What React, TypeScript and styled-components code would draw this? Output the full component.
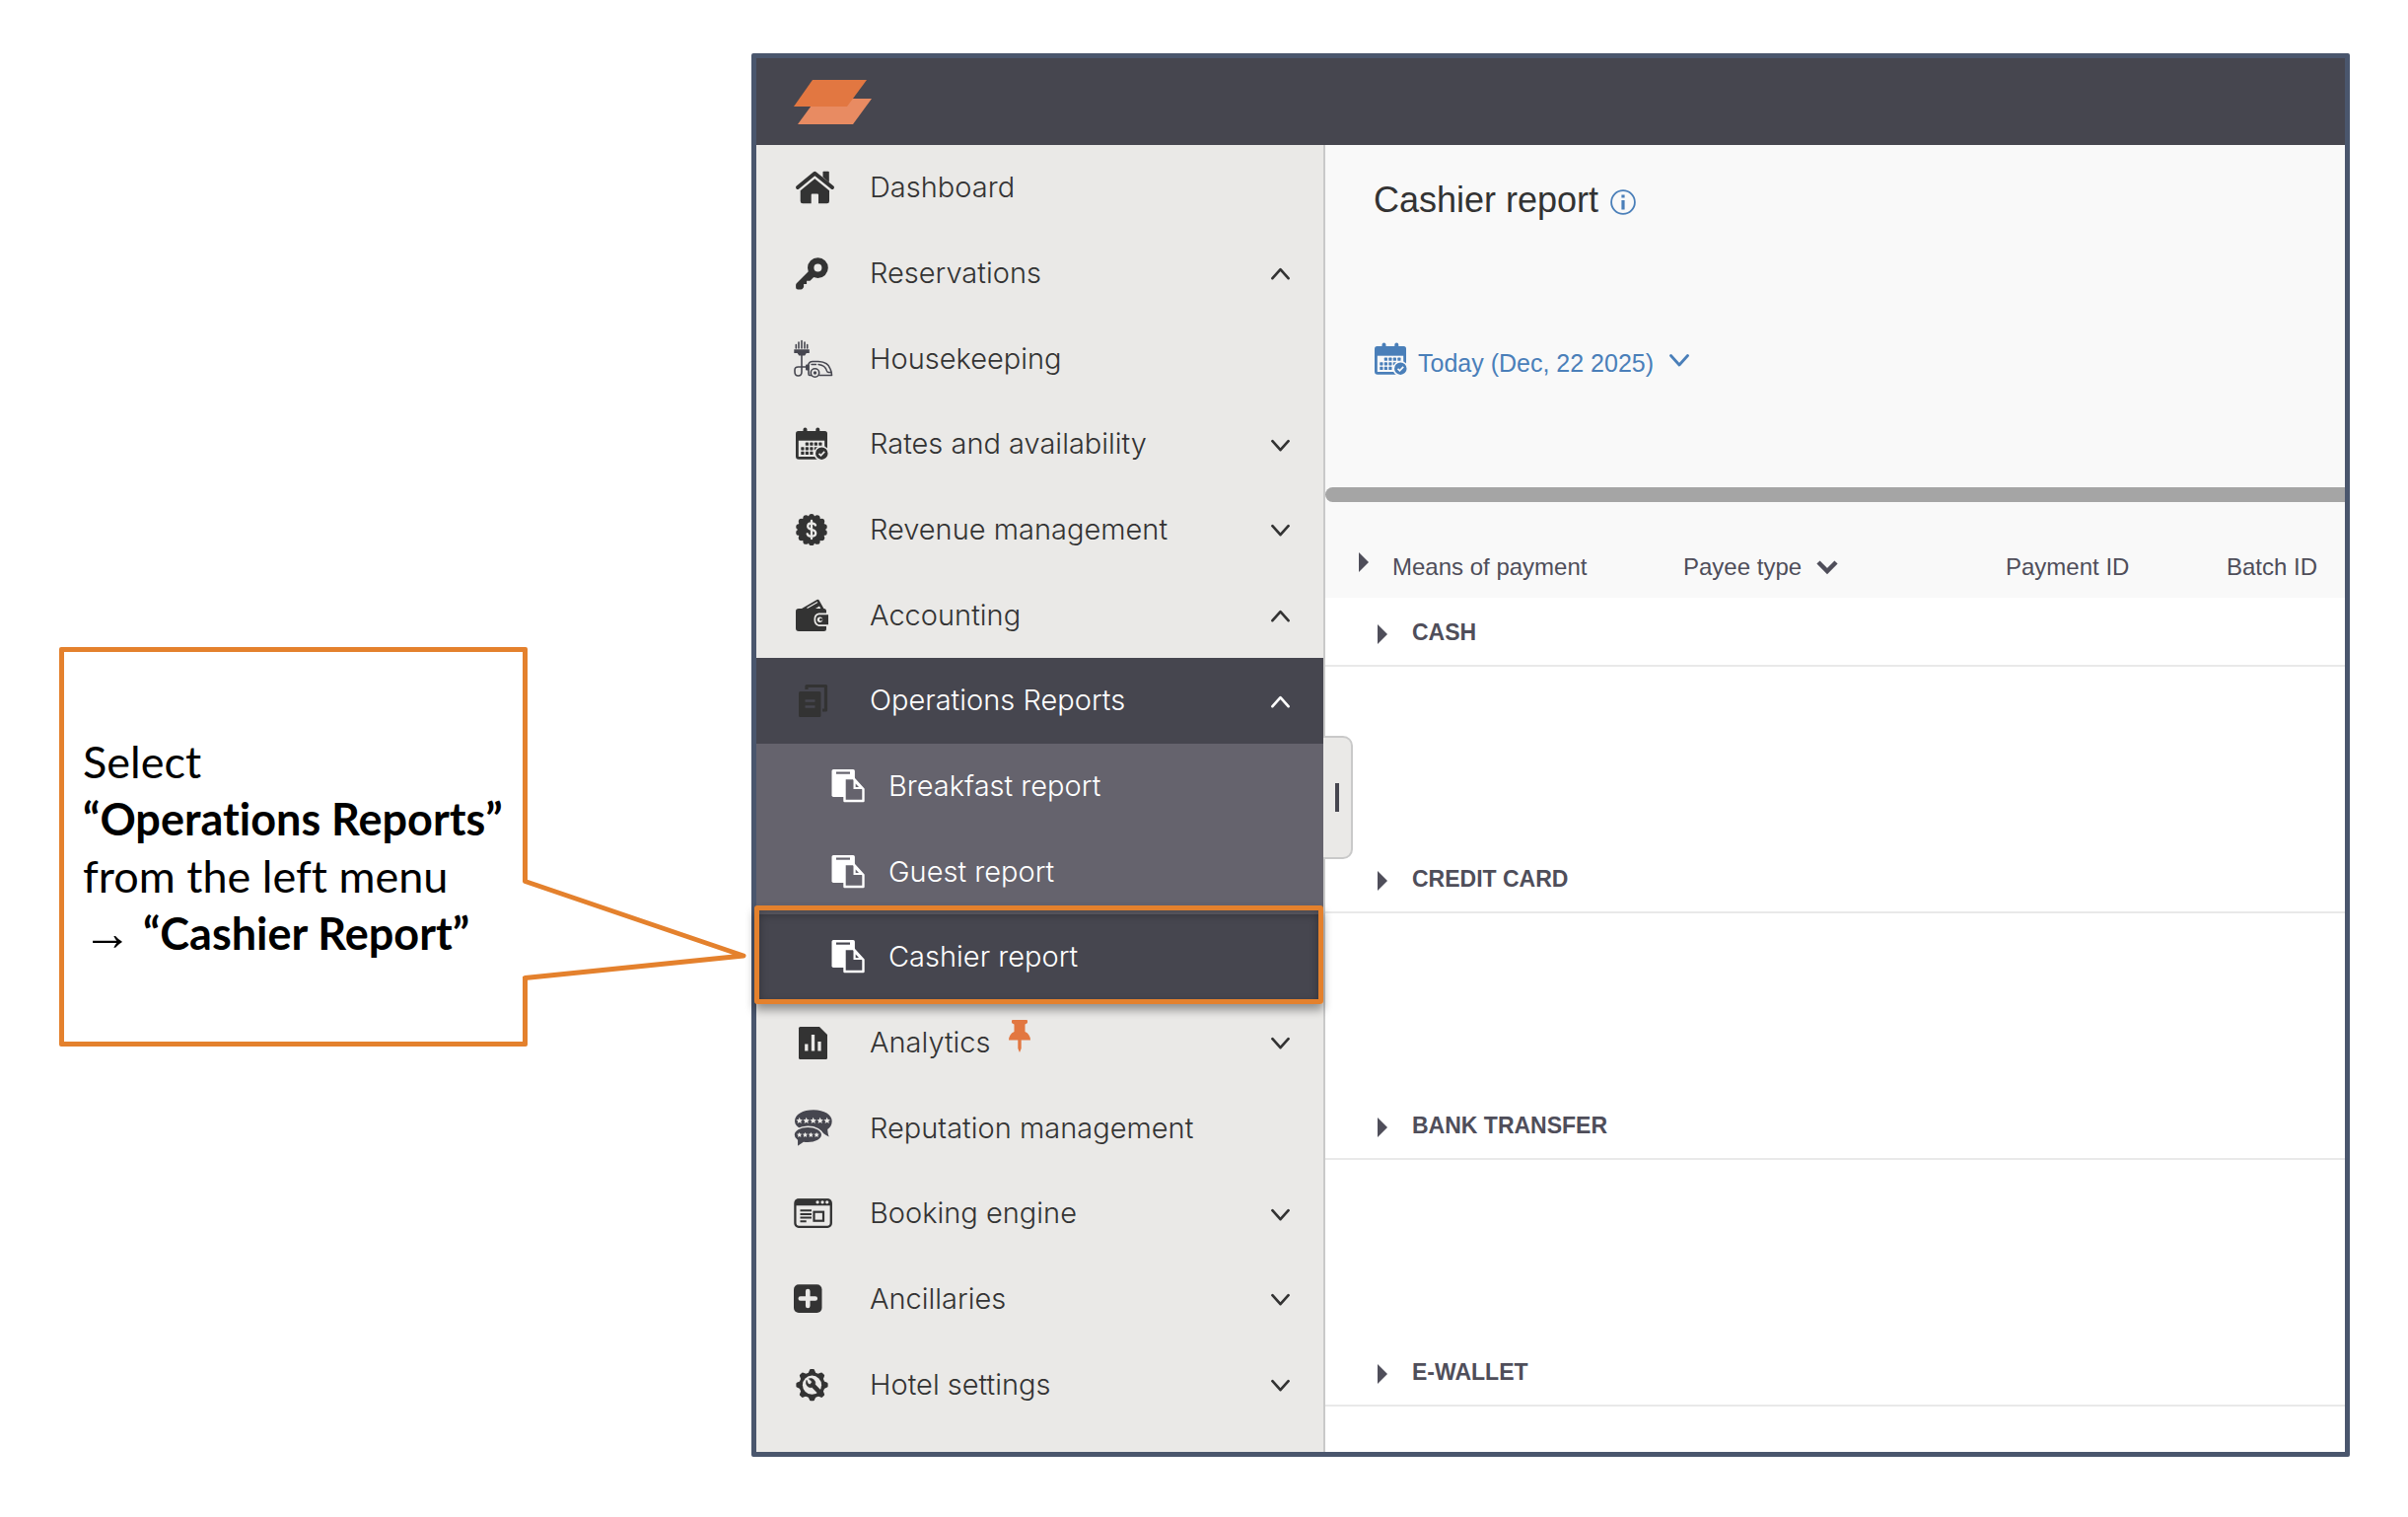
import React, { useState } from "react";
import styled, { createGlobalStyle, css } from "styled-components";

const color = {
  ink: "#333333",
  slate: "#46464f",
  slateLight: "#65636d",
  sand: "#eae9e7",
  paper: "#f9f9f9",
  line: "#c9c9c9",
  rule: "#e9e9e9",
  frame: "#4a566d",
  accent: "#e4812d",
  brand: "#e27741",
  link: "#4a7fb9",
  label: "#4f4e5a",
};

const GlobalStyle = createGlobalStyle`
  *, *::before, *::after { box-sizing: border-box; }
  body {
    margin: 0;
    background: #ffffff;
    color: ${color.ink};
    font-family: "Liberation Sans", Arial, sans-serif;
  }
  button { font: inherit; color: inherit; background: none; border: 0; padding: 0; cursor: pointer; }
  a { color: inherit; text-decoration: none; }
  svg { display: block; flex: none; }
`;

/* ---------- page ---------- */

const Page = styled.main`
  display: flex;
  align-items: stretch;
  min-height: 100vh;
  padding: 54px 59px 61px 60px;
`;

const CalloutColumn = styled.div`
  flex: none;
  width: 702px;
  padding-top: 602px;
`;

const Callout = styled.aside`
  position: relative;
  display: flex;
  align-items: center;
  width: 475px;
  height: 405px;
  padding-left: 19px;
  border: 5px solid ${color.accent};
  border-radius: 2px;
  background: #ffffff;
`;

const CalloutText = styled.p`
  margin: 0;
  color: #000000;
  font-family: Lato, sans-serif;
  font-size: 45px;
  line-height: 58px;
  font-variant-ligatures: none;
  white-space: nowrap;
`;

const Arrow = styled.span`
  font-family: "Liberation Sans", Arial, sans-serif;
  font-size: 50px;
  line-height: 1;
`;

const CalloutTail = styled.svg`
  position: absolute;
  top: 229px;
  left: 100%;
`;

/* ---------- application window ---------- */

const AppWindow = styled.section`
  display: flex;
  flex: 1;
  flex-direction: column;
  min-width: 0;
  border: 5px solid ${color.frame};
  border-radius: 2px;
`;

const TopBar = styled.header`
  display: flex;
  align-items: center;
  height: 88px;
  padding-left: 38px;
  background: ${color.slate};
`;

const Body = styled.div`
  position: relative;
  display: grid;
  flex: 1;
  grid-template-columns: 577px minmax(0, 1fr);
`;

const Sidebar = styled.nav`
  display: flex;
  padding-bottom: 25px;
  border-right: 2px solid ${color.line};
  background: ${color.sand};
`;

const MenuList = styled.ul`
  display: grid;
  flex: 1;
  grid-auto-rows: 1fr;
  margin: 0;
  padding: 0;
  list-style: none;
`;

type Tone = "plain" | "open" | "sub" | "current";

const tones = {
  plain: css`
    background: ${color.sand};
    color: ${color.ink};
  `,
  open: css`
    background: ${color.slate};
    color: #ffffff;
  `,
  sub: css`
    background: ${color.slateLight};
    color: #ffffff;
  `,
  current: css`
    background: ${color.slate};
    color: #ffffff;

    &::after {
      content: "";
      position: absolute;
      inset: -9px 0 -4px -2px;
      border: 5px solid ${color.accent};
      border-radius: 3px;
      box-shadow: 0 6px 10px rgba(0, 0, 0, 0.38), inset 0 4px 10px rgba(0, 0, 0, 0.3);
      pointer-events: none;
    }
  `,
};

const MenuItem = styled.li<{ $tone: Tone }>`
  position: relative;
  display: flex;
  z-index: ${(p) => (p.$tone === "current" ? 1 : 0)};
  ${(p) => tones[p.$tone]}
`;

const MenuLink = styled.a<{ $nested: boolean }>`
  display: flex;
  flex: 1;
  align-items: center;
  gap: ${(p) => (p.$nested ? "24px" : "37px")};
  padding: 0 34px 0 ${(p) => (p.$nested ? "76px" : "38px")};
  font-family: Inter, sans-serif;
  font-size: 29px;
  font-weight: 300;
  line-height: 36px;
  white-space: nowrap;
`;

const MenuLabel = styled.span`
  display: flex;
  flex: 1;
  align-items: center;
  gap: 18px;
`;

const PinIcon = styled.svg`
  margin-bottom: 13px;
`;

const CollapseHandle = styled.button`
  position: absolute;
  top: calc(50% - 64px);
  left: 575px;
  display: flex;
  align-items: center;
  justify-content: center;
  width: 30px;
  height: 125px;
  border: 2px solid ${color.line};
  border-left: 0;
  border-radius: 0 10px 10px 0;
  background: ${color.sand};

  &::before {
    content: "";
    width: 4px;
    height: 29px;
    background: ${color.slate};
  }
`;

/* ---------- report ---------- */

const Report = styled.div`
  display: flex;
  flex-direction: column;
  min-width: 0;
  background: #ffffff;
`;

const ReportHead = styled.div`
  display: flex;
  flex-direction: column;
  align-items: flex-start;
  gap: 119px;
  height: 347px;
  padding: 36px 0 0 49px;
  background: ${color.paper};
`;

const TitleRow = styled.div`
  display: flex;
  align-items: center;
  gap: 12px;
`;

const Title = styled.h1`
  margin: 0;
  font-size: 36px;
  font-weight: 400;
  line-height: 40px;
`;

const InfoButton = styled.button`
  padding-top: 3px;
  color: ${color.link};
`;

const DateButton = styled.button`
  display: flex;
  align-items: center;
  color: ${color.link};
  font-size: 25px;
  line-height: 36px;
`;

const DateText = styled.span`
  padding: 8px 16px 0 10px;
`;

const ScrollTrack = styled.div`
  height: 17px;
  background: ${color.paper};
`;

const ScrollThumb = styled.div`
  height: 15px;
  border-radius: 8px 0 0 8px;
  background: #a5a5a5;
`;

const Table = styled.table`
  width: 100%;
  border-collapse: collapse;
  table-layout: fixed;
  color: ${color.label};
`;

const Column = styled.col<{ $width?: number }>`
  width: ${(p) => (p.$width ? `${p.$width}px` : "auto")};
`;

const HeadCell = styled.th`
  height: 95px;
  padding: 32px 0 0;
  background: ${color.paper};
  font-size: 24px;
  font-weight: 400;
  line-height: 36px;
  text-align: left;
  white-space: nowrap;
`;

const HeadButton = styled.button<{ $indent?: number }>`
  display: flex;
  align-items: center;
  padding-left: ${(p) => p.$indent ?? 0}px;
`;

const HeadArrow = styled.svg`
  margin: 0 24px 10px 0;
`;

const SortIcon = styled.svg`
  margin-left: 15px;
`;

const GroupCell = styled.th`
  height: 69px;
  padding: 2px 0 0 53px;
  border-bottom: 2px solid ${color.rule};
  font-size: 23px;
  font-weight: 700;
  line-height: 36px;
  text-align: left;
`;

const GroupButton = styled.button`
  display: flex;
  align-items: center;
  gap: 25px;
`;

const GroupArrow = styled.svg`
  margin-top: 3px;
`;

const SpacerCell = styled.td`
  height: 181px;
  padding: 0;
`;

/* ---------- drawings ---------- */

const Logo = () => (
  <svg width="79" height="45" viewBox="0 0 79 45" role="img" aria-label="Logo">
    <path d="M23 19H79L60 45H4Z" fill="#e88b62" />
    <path d="M19 0H74L54 27H0Z" fill={color.brand} />
  </svg>
);

const Icon40 = ({ children }: { children: React.ReactNode }) => (
  <svg width="40" height="40" viewBox="0 0 40 40" aria-hidden="true" overflow="visible">
    {children}
  </svg>
);

const HouseIcon = () => (
  <Icon40>
    <path d="M29.5 4.6q0-.9.9-.9h4.5q.9 0 .9.9V15l-6.300-5.500Z" fill={color.ink} />
    <path d="M4 20 21.300 5.800 39 20" fill="none" stroke={color.ink} strokeWidth="4" strokeLinecap="round" strokeLinejoin="round" />
    <path d="M21.300 11.300 36 23.300V34q0 2.300-2.300 2.300H25V27.500q0-1-1-1h-5.300q-1 0-1 1v8.800H9q-2.300 0-2.300-2.300V23.300Z" fill={color.ink} />
  </Icon40>
);

const KeyIcon = () => (
  <Icon40>
    <circle cx="24.400" cy="14.600" r="7.200" fill="none" stroke={color.ink} strokeWidth="6.400" />
    <path d="M15 18 3 30q-.9.9-.9 2v2.500q0 2 2 2h3q1.400 0 2-.9l1-1.500v-3h3v-3.300h3.300l4.600-4.500Z" fill={color.ink} />
  </Icon40>
);

const VacuumIcon = () => (
  <Icon40>
    <g fill="none" stroke={color.slate} strokeWidth="1.600" strokeLinecap="round" strokeLinejoin="round">
      <path d="M2.300 5.500V9M5 3v6M8 1.500V9M11 3v6M13.700 5.500V9" />
      <path d="M8 16v17q0 4-3.500 4T1 33v-2q0-3 3.500-3H12" />
      <path d="M17.500 36.500H16q-1 0-1-1.500V25q1-2.500 4-2.500h6q10 .5 12 7.500 1.500 3 1.500 6.500H26" />
      <path d="M18 25.500h4.500M25 25.500q7 .8 8.500 6.500.5 1.500 1.500 1.500h2.500" strokeWidth="1.400" />
      <circle cx="21.500" cy="34" r="4.200" />
    </g>
    <path d="M.3 10.300h15.500V14h-3l-1.600 2.500H5.300L3.600 14H.3Z" fill={color.slate} />
    <rect x="12" y="25.500" width="3.500" height="6" rx="1" fill={color.slate} />
    <circle cx="21.500" cy="34" r="1.700" fill={color.slate} />
  </Icon40>
);

const CalendarShape = ({ ink, paper }: { ink: string; paper: string }) => (
  <>
    <path d="M4.500 7h27Q34 7 34 9.500v23q0 3.300-3 3.300H5q-3 0-3-3v-23Q2 7 4.500 7Z" fill={ink} />
    <path d="M4.800 16.700h26.400V33H4.800Z" fill={paper} />
    <path d="M11.500 5.500V9M24.300 5.500V9" stroke={ink} strokeWidth="4" strokeLinecap="round" />
    {[
      [0, 1, 1, 1, 1],
      [1, 1, 1, 1, 0],
      [1, 1, 1, 0, 0],
    ].map((row, y) =>
      row.map((on, x) =>
        on ? (
          <rect key={`${x}-${y}`} x={7.300 + x * 4.500} y={18.600 + y * 4.600} width="3.200" height="3.200" rx=".6" fill={ink} />
        ) : null
      )
    )}
    <circle cx="28.300" cy="29.700" r="7" fill={ink} stroke={paper} strokeWidth="1.500" />
    <path d="m25.500 29.800 2 2 3.700-4" fill="none" stroke={paper} strokeWidth="1.700" />
  </>
);

const CalendarIcon = () => (
  <Icon40>
    <CalendarShape ink={color.ink} paper={color.sand} />
  </Icon40>
);

const MoneyBadgeIcon = () => (
  <Icon40>
    <circle cx="18" cy="20" r="14" fill={color.ink} />
    {Array.from({ length: 14 }, (_, i) => {
      const a = (i / 14) * Math.PI * 2 - Math.PI / 2;
      return <circle key={i} cx={18 + 13.200 * Math.cos(a)} cy={20 + 13.200 * Math.sin(a)} r="2.900" fill={color.ink} />;
    })}
    <path
      d="M18 11v18M22 15.500q-1-2.200-4-2.200-3.800 0-3.800 3.200 0 2.500 3.800 3.400 4.200 1 4.200 3.700 0 3.200-4.200 3.200-3.400 0-4.300-2.500"
      fill="none"
      stroke={color.sand}
      strokeWidth="2.300"
      strokeLinecap="round"
    />
  </Icon40>
);

const WalletIcon = () => (
  <Icon40>
    <path d="m8 13 15.500-9q1.500-.8 2.300.7L31 14H8Z" fill={color.ink} />
    <path d="m13.500 12.500 10.500-6" stroke={color.sand} strokeWidth="1.200" />
    <path d="m22 13 4-2.500 1.300 2.500Z" fill={color.sand} />
    <path d="M5 13h25.500q2.500 0 2.500 2.500v18q0 2.500-2.500 2.500H5q-3 0-3-3V15.500Q2 13 5 13Z" fill={color.ink} />
    <path d="M35 18.300h-9.500q-4.200.8-4.200 5.700t4.200 6.200H35" fill={color.ink} stroke={color.sand} strokeWidth="1.700" />
    <circle cx="26.500" cy="24.200" r="2.700" fill={color.sand} />
    <circle cx="27.500" cy="24.200" r="1.400" fill={color.ink} />
  </Icon40>
);

const CopyIcon = () => (
  <Icon40>
    <path d="M13 9V5.500h19.500V30H29" fill="none" stroke={color.ink} strokeWidth="3.200" strokeLinejoin="round" />
    <rect x="5" y="11" width="22.500" height="26" rx="1.500" fill={color.ink} />
    <path d="M11.500 20.500h10M11.500 26.500h10" stroke={color.slate} strokeWidth="2.600" />
  </Icon40>
);

const ChartFileIcon = () => (
  <Icon40>
    <path d="M6.500 4H26l8 8v23.500q0 1.500-1.500 1.500h-26Q5 37 5 35.500v-30Q5 4 6.500 4Z" fill={color.ink} />
    <path d="M12.800 28.500v-7M19.500 28.500V12M26 28.500V19" stroke={color.sand} strokeWidth="3.300" />
  </Icon40>
);

const Star = ({ x, y, r }: { x: number; y: number; r: number }) => (
  <polygon
    fill={color.sand}
    points={Array.from({ length: 10 }, (_, i) => {
      const a = (i / 10) * Math.PI * 2 - Math.PI / 2;
      const d = i % 2 ? r * 0.48 : r;
      return `${x + d * Math.cos(a)},${y + d * Math.sin(a)}`;
    }).join(" ")}
  />
);

const ReviewsIcon = () => (
  <Icon40>
    <path d="M20 1.300c11 0 18.700 5 18.700 11.400 0 4-2 6.500-4.500 8.300.2 3 .5 5 1.500 7.400-4-1.600-6.700-4-8.200-6.400C19 24 1 22 1 12.700 1 6 9 1.300 20 1.300Z" fill={color.slate} />
    <path d="M14.200 18.200c8 0 14.500 3.600 14.500 8.400s-6.500 8.200-14.500 8.200c-1.700 0-3 0-4.200-.3L3.300 39v-6.800C1 30.800 0 28.800 0 26.600c0-4.800 6.200-8.400 14.200-8.400Z" fill={color.slate} stroke={color.sand} strokeWidth="1.500" />
    {[5.700, 12.700, 19.700, 26.700, 33.700].map((x) => (
      <Star key={x} x={x} y={12.200} r={3.400} />
    ))}
    {[5.700, 11.500, 17.300, 23.100].map((x) => (
      <Star key={x} x={x} y={26.700} r={2.800} />
    ))}
  </Icon40>
);

const BrowserIcon = () => (
  <Icon40>
    <rect x="1.400" y="6.400" width="36.400" height="27.400" rx="3.500" fill="none" stroke={color.ink} strokeWidth="2.300" />
    <path d="M1 12.300V9q0-3.500 3.500-3.500h30Q38 5.500 38 9v3.300Z" fill={color.ink} />
    <path d="M24 8.800h.1M29 8.800h.1M33.700 8.800h.1" stroke={color.sand} strokeWidth="3.200" strokeLinecap="round" />
    <path d="M6.500 17.200H18M6.500 20.900H18M6.500 24.600H18M6.500 28.300h6.200" stroke={color.ink} strokeWidth="2" />
    <rect x="20.500" y="18.700" width="9.500" height="9" fill="none" stroke={color.ink} strokeWidth="2.200" />
  </Icon40>
);

const PlusBoxIcon = () => (
  <Icon40>
    <rect x="0" y="5.300" width="28.500" height="28.700" rx="5" fill={color.ink} />
    <path d="M14.250 12v15M6.800 19.500h15" stroke={color.sand} strokeWidth="4.600" strokeLinecap="round" />
  </Icon40>
);

const GearIcon = () => (
  <Icon40>
    <circle cx="18.500" cy="20.200" r="13" fill={color.ink} />
    {Array.from({ length: 8 }, (_, i) => (
      <path
        key={i}
        d="m14.500 8.500 1.400-3.200q.3-1.200 1.300-1.200h2.600q1 0 1.300 1.200l1.400 3.200Z"
        fill={color.ink}
        transform={`rotate(${i * 45} 18.500 20.200)`}
      />
    ))}
    <circle cx="18.500" cy="20.200" r="9.600" fill={color.sand} />
    <path
      d="M13 15.300q-1.500 3.500.8 6 2 2 4.700 1.300l7 7.200 3-3-6.800-7q.8-3-1.400-5-2.200-2-5-1l3.200 3.200-1.800 2.500-2.200-.4Z"
      fill={color.ink}
      stroke={color.ink}
      strokeWidth=".6"
      strokeLinejoin="round"
    />
  </Icon40>
);

const ReportIcon = ({ back }: { back: string }) => (
  <svg width="34" height="34" viewBox="0 0 34 34" aria-hidden="true">
    <path d="M2.200 0h20q1.700 0 1.700 1.700V28H2.200Q.5 28 .5 26.300V1.700Q.5 0 2.200 0Z" fill="#fff" />
    <path d="M5 3.600h14" stroke={back} strokeWidth="2.200" />
    <path d="M13.500 9h9L32.500 20v12h-19Z" fill={back} stroke="#fff" strokeWidth="2.400" strokeLinejoin="round" />
    <path d="M22.500 8.500v11.500h10Z" fill="#fff" />
    <path d="M24.700 14.500V18h3.300Z" fill={back} />
  </svg>
);

const Chevron = ({ up, width }: { up?: boolean; width: number }) => (
  <svg width={width} height={width} viewBox="0 0 20 20" fill="none" stroke="currentColor" strokeWidth="2.800" strokeLinecap="round" strokeLinejoin="round" aria-hidden="true">
    <path d={up ? "M1.500 16 10 6.500l8.500 9.500" : "M1.500 6.500 10 16l8.500-9.500"} />
  </svg>
);

const Pin = () => (
  <PinIcon width="22" height="33" viewBox="0 0 22 33" fill={color.brand} role="img" aria-label="Pinned">
    <path d="M4 0h14q1 0 1 1v1.500q0 1-1 1.300L16.500 4.500V12q5 2 5.500 8.500H0Q.5 14 5.500 12V4.500L4 3.800Q3 3.500 3 2.500V1q0-1 1-1Z" />
    <path d="M9.300 20h3.400v9L11 33l-1.700-4Z" />
  </PinIcon>
);

const InfoIcon = () => (
  <svg width="26" height="26" viewBox="0 0 26 26" fill="none" stroke="currentColor" aria-hidden="true">
    <circle cx="13" cy="13" r="11.900" strokeWidth="1.800" />
    <path d="M13 11v9.500M13 5.500v3" strokeWidth="3.200" />
  </svg>
);

const arrowPath = "M0 0 10 10 0 20Z";

/* ---------- data ---------- */

type Entry = {
  label: string;
  icon?: () => React.ReactElement;
  tone?: Tone;
  chevron?: "up" | "down";
  pinned?: boolean;
};

const menu: Entry[] = [
  { label: "Dashboard", icon: HouseIcon },
  { label: "Reservations", icon: KeyIcon, chevron: "up" },
  { label: "Housekeeping", icon: VacuumIcon },
  { label: "Rates and availability", icon: CalendarIcon, chevron: "down" },
  { label: "Revenue management", icon: MoneyBadgeIcon, chevron: "down" },
  { label: "Accounting", icon: WalletIcon, chevron: "up" },
  { label: "Operations Reports", icon: CopyIcon, tone: "open", chevron: "up" },
  { label: "Breakfast report", tone: "sub" },
  { label: "Guest report", tone: "sub" },
  { label: "Cashier report", tone: "current" },
  { label: "Analytics", icon: ChartFileIcon, chevron: "down", pinned: true },
  { label: "Reputation management", icon: ReviewsIcon },
  { label: "Booking engine", icon: BrowserIcon, chevron: "down" },
  { label: "Ancillaries", icon: PlusBoxIcon, chevron: "down" },
  { label: "Hotel settings", icon: GearIcon, chevron: "down" },
];

const groups = ["CASH", "CREDIT CARD", "BANK TRANSFER", "E-WALLET"];

const MenuRow = ({ label, icon: Icon, tone = "plain", chevron, pinned }: Entry) => (
  <MenuItem $tone={tone}>
    <MenuLink href="#" $nested={!Icon} aria-current={tone === "current" ? "page" : undefined}>
      {Icon ? <Icon /> : <ReportIcon back={tone === "current" ? color.slate : color.slateLight} />}
      <MenuLabel>
        {label}
        {pinned && <Pin />}
      </MenuLabel>
      {chevron && <Chevron width={19} up={chevron === "up"} />}
    </MenuLink>
  </MenuItem>
);

export default function App() {
  const [collapsed, setCollapsed] = useState(false);

  return (
    <>
      <GlobalStyle />
      <Page>
        <CalloutColumn>
          <Callout>
            <CalloutText>
              Select
              <br />
              <strong>“Operations Reports”</strong>
              <br />
              from the left menu
              <br />
              <strong>
                <Arrow>→</Arrow> “Cashier Report”
              </strong>
            </CalloutText>
            <CalloutTail width="229" height="106" viewBox="0 0 229 106" aria-hidden="true">
              <path d="M0 4H3L223 79 3 100H0Z" fill="#fff" />
              <path d="M2.500 1.500V3.500L224 79 2.500 101.500V104" fill="none" stroke={color.accent} strokeWidth="5" strokeLinejoin="round" />
            </CalloutTail>
          </Callout>
        </CalloutColumn>

        <AppWindow>
          <TopBar>
            <Logo />
          </TopBar>
          <Body>
            <Sidebar aria-label="Main menu">
              <MenuList>
                {menu.map((entry) => (
                  <MenuRow key={entry.label} {...entry} />
                ))}
              </MenuList>
            </Sidebar>

            <Report>
              <ReportHead>
                <TitleRow>
                  <Title>Cashier report</Title>
                  <InfoButton type="button" aria-label="About this report">
                    <InfoIcon />
                  </InfoButton>
                </TitleRow>
                <DateButton type="button">
                  <svg width="35" height="36" viewBox="1 2 35 36" aria-hidden="true">
                    <CalendarShape ink={color.link} paper={color.paper} />
                  </svg>
                  <DateText>Today (Dec, 22 2025)</DateText>
                  <Chevron width={20} />
                </DateButton>
              </ReportHead>
              <ScrollTrack>
                <ScrollThumb />
              </ScrollTrack>
              <Table>
                <colgroup>
                  <Column $width={363} />
                  <Column $width={327} />
                  <Column $width={224} />
                  <Column />
                </colgroup>
                <thead>
                  <tr>
                    <HeadCell scope="col">
                      <HeadButton type="button" $indent={34}>
                        <HeadArrow width="10" height="20" viewBox="0 0 10 20" fill="currentColor" aria-hidden="true">
                          <path d={arrowPath} />
                        </HeadArrow>
                        Means of payment
                      </HeadButton>
                    </HeadCell>
                    <HeadCell scope="col">
                      <HeadButton type="button">
                        Payee type
                        <SortIcon width="22" height="22" viewBox="0 0 22 22" fill="none" stroke="currentColor" strokeWidth="4.500" aria-hidden="true">
                          <path d="M2 6 11 15 20 6" />
                        </SortIcon>
                      </HeadButton>
                    </HeadCell>
                    <HeadCell scope="col">Payment ID</HeadCell>
                    <HeadCell scope="col">Batch ID</HeadCell>
                  </tr>
                </thead>
                {groups.map((name, i) => (
                  <tbody key={name}>
                    <tr>
                      <GroupCell scope="rowgroup" colSpan={4}>
                        <GroupButton type="button" aria-expanded="false">
                          <GroupArrow width="10" height="20" viewBox="0 0 10 20" fill="currentColor" aria-hidden="true">
                            <path d={arrowPath} />
                          </GroupArrow>
                          {name}
                        </GroupButton>
                      </GroupCell>
                    </tr>
                    {i < groups.length - 1 && (
                      <tr>
                        <SpacerCell colSpan={4} />
                      </tr>
                    )}
                  </tbody>
                ))}
              </Table>
            </Report>
            <CollapseHandle
              type="button"
              aria-label="Collapse menu"
              aria-pressed={collapsed}
              onClick={() => setCollapsed(!collapsed)}
            />
          </Body>
        </AppWindow>
      </Page>
    </>
  );
}
